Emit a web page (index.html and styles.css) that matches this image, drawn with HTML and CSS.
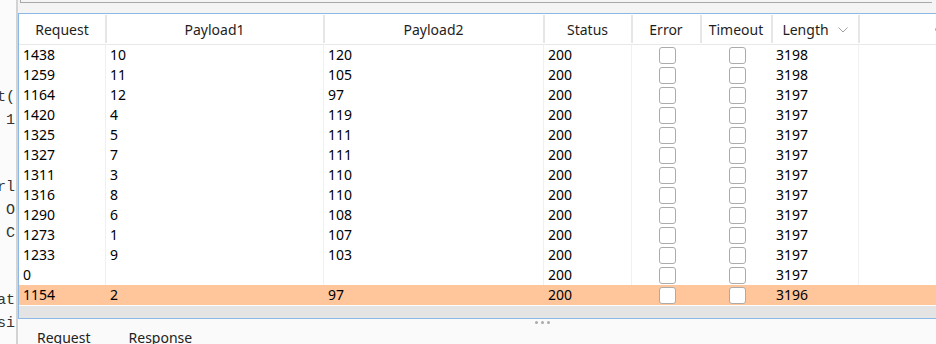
FILE: index.html
```html
<!DOCTYPE html>
<html>
<head>
<meta charset="utf-8">
<link rel="stylesheet" href="styles.css">
</head>
<body>
<div class="code"><pre>t(
 1)


rl
 O
 Cl


at
si</pre></div>
<div class="main">
  <div class="top"><div class="top-box"></div></div>
  <div class="table">
    <div class="thead cols">
      <div class="th sep">Request</div>
      <div class="th sep">Payload1</div>
      <div class="th sep">Payload2</div>
      <div class="th sep">Status</div>
      <div class="th sep">Error</div>
      <div class="th sep">Timeout</div>
      <div class="th sep">Length<svg class="chev" width="10" height="6" viewBox="0 0 10 6"><polyline points="0.5,0.5 5,5 9.5,0.5" fill="none" stroke="#a0a0a0" stroke-width="1"/></svg></div>
      <div class="th last"><span class="gear"></span></div>
    </div>
    <div class="tbody">
      <div class="tr cols"><div class="td line">1438</div><div class="td line">10</div><div class="td line">120</div><div class="td line">200</div><div class="td box"><span class="cb"></span></div><div class="td box"><span class="cb"></span></div><div class="td line">3198</div><div class="td"></div></div>
      <div class="tr cols"><div class="td line">1259</div><div class="td line">11</div><div class="td line">105</div><div class="td line">200</div><div class="td box"><span class="cb"></span></div><div class="td box"><span class="cb"></span></div><div class="td line">3198</div><div class="td"></div></div>
      <div class="tr cols"><div class="td line">1164</div><div class="td line">12</div><div class="td line">97</div><div class="td line">200</div><div class="td box"><span class="cb"></span></div><div class="td box"><span class="cb"></span></div><div class="td line">3197</div><div class="td"></div></div>
      <div class="tr cols"><div class="td line">1420</div><div class="td line">4</div><div class="td line">119</div><div class="td line">200</div><div class="td box"><span class="cb"></span></div><div class="td box"><span class="cb"></span></div><div class="td line">3197</div><div class="td"></div></div>
      <div class="tr cols"><div class="td line">1325</div><div class="td line">5</div><div class="td line">111</div><div class="td line">200</div><div class="td box"><span class="cb"></span></div><div class="td box"><span class="cb"></span></div><div class="td line">3197</div><div class="td"></div></div>
      <div class="tr cols"><div class="td line">1327</div><div class="td line">7</div><div class="td line">111</div><div class="td line">200</div><div class="td box"><span class="cb"></span></div><div class="td box"><span class="cb"></span></div><div class="td line">3197</div><div class="td"></div></div>
      <div class="tr cols"><div class="td line">1311</div><div class="td line">3</div><div class="td line">110</div><div class="td line">200</div><div class="td box"><span class="cb"></span></div><div class="td box"><span class="cb"></span></div><div class="td line">3197</div><div class="td"></div></div>
      <div class="tr cols"><div class="td line">1316</div><div class="td line">8</div><div class="td line">110</div><div class="td line">200</div><div class="td box"><span class="cb"></span></div><div class="td box"><span class="cb"></span></div><div class="td line">3197</div><div class="td"></div></div>
      <div class="tr cols"><div class="td line">1290</div><div class="td line">6</div><div class="td line">108</div><div class="td line">200</div><div class="td box"><span class="cb"></span></div><div class="td box"><span class="cb"></span></div><div class="td line">3197</div><div class="td"></div></div>
      <div class="tr cols"><div class="td line">1273</div><div class="td line">1</div><div class="td line">107</div><div class="td line">200</div><div class="td box"><span class="cb"></span></div><div class="td box"><span class="cb"></span></div><div class="td line">3197</div><div class="td"></div></div>
      <div class="tr cols"><div class="td line">1233</div><div class="td line">9</div><div class="td line">103</div><div class="td line">200</div><div class="td box"><span class="cb"></span></div><div class="td box"><span class="cb"></span></div><div class="td line">3197</div><div class="td"></div></div>
      <div class="tr cols"><div class="td line">0</div><div class="td line"></div><div class="td line"></div><div class="td line">200</div><div class="td box"><span class="cb"></span></div><div class="td box"><span class="cb"></span></div><div class="td line">3197</div><div class="td"></div></div>
      <div class="tr cols selected"><div class="td line">1154</div><div class="td line">2</div><div class="td line">97</div><div class="td line">200</div><div class="td box"><span class="cb"></span></div><div class="td box"><span class="cb"></span></div><div class="td line">3196</div><div class="td"></div></div>
    </div>
    <div class="gap"></div>
    <div class="hscroll"></div>
  </div>
  <div class="bottom">
    <div class="dots"><span></span><span></span><span></span></div>
    <div class="tabs"><span class="tab">Request</span><span class="tab">Response</span></div>
  </div>
</div>
</body>
</html>
```
FILE: styles.css
```css
html, body {
  margin: 0;
  padding: 0;
}
body {
  width: 936px;
  height: 344px;
  overflow: hidden;
  display: flex;
  font-family: "Noto Sans", sans-serif;
  font-size: 14px;
  color: #000;
  background: #fff;
}
.code {
  width: 16px;
  flex: none;
  background: #fbfbfb;
  border-right: 2px solid #d3d3d3;
  overflow: hidden;
}
.code pre {
  margin: 0 0 0 -3px;
  padding-top: 87px;
  font-family: "Liberation Mono", monospace;
  font-size: 15px;
  line-height: 22.6px;
  color: #333;
}
.main {
  flex: 1;
  min-width: 0;
  display: flex;
  flex-direction: column;
}
.top {
  height: 13px;
  flex: none;
  background: #f4f4f4;
}
.top-box {
  height: 2px;
  margin-left: 2px;
  margin-right: 4px;
  border-left: 1px solid #a9a9a9;
  border-bottom: 1px solid #a9a9a9;
}
.table {
  flex: none;
  border-top: 1px solid #8cb8e6;
  border-left: 1px solid #8cb8e6;
  border-bottom: 1px solid #8cb8e6;
  background: #fff;
}
.cols {
  display: grid;
  grid-template-columns: 87px 218px 220px 88px 69px 71px 87px 1fr;
}
.thead {
  height: 30px;
  border-bottom: 1px solid #e8e8e8;
  color: #1e1e1e;
}
.th {
  display: flex;
  align-items: center;
  justify-content: center;
  margin: 1px 0;
  box-sizing: border-box;
}
.th.sep {
  border-right: 1px solid #e6e6e6;
  box-shadow: 1px 0 0 #e6e6e6;
}
.th.last {
  justify-content: flex-end;
}
.chev {
  margin-left: 9px;
  margin-top: 1px;
}
.gear {
  width: 2px;
  height: 3px;
  margin-right: -1px;
  background: #f2a64e;
  border-radius: 1px;
}
.tr {
  height: 20px;
}
.td {
  box-sizing: border-box;
  padding-left: 4px;
  line-height: 20px;
  white-space: nowrap;
  overflow: hidden;
}
.td.line {
  border-right: 1px solid #f0f0f0;
}
.tr .td:nth-child(7) {
  border-right: 1px solid #f0f0f0;
}
.td.box {
  padding-left: 0;
  display: flex;
  align-items: center;
  justify-content: center;
}
.tr .td.box:nth-child(5) {
  padding-left: 1px;
}
.tr .td.box:nth-child(6) {
  padding-left: 1px;
}
.cb {
  width: 17px;
  height: 17px;
  box-sizing: border-box;
  border: 1.5px solid #ababab;
  border-radius: 3px;
  background: #fff;
}
.selected {
  background: #ffc59b;
}
.selected .td.line,
.selected .td:nth-child(7) {
  border-right-color: transparent;
}
.gap {
  height: 1px;
  background: #fdfdfd;
}
.hscroll {
  height: 12px;
  background: #e4e4e4;
}
.bottom {
  flex: 1;
  background: #fafafa;
}
.dots {
  display: flex;
  gap: 3px;
  padding-left: 517px;
  margin-top: 2px;
  height: 3px;
}
.dots span {
  width: 3px;
  height: 3px;
  border-radius: 50%;
  background: #ababab;
}
.tabs {
  display: flex;
  margin-top: 4px;
  line-height: 19px;
  color: #222;
}
.tab {
  padding: 0 19px;
}
```
